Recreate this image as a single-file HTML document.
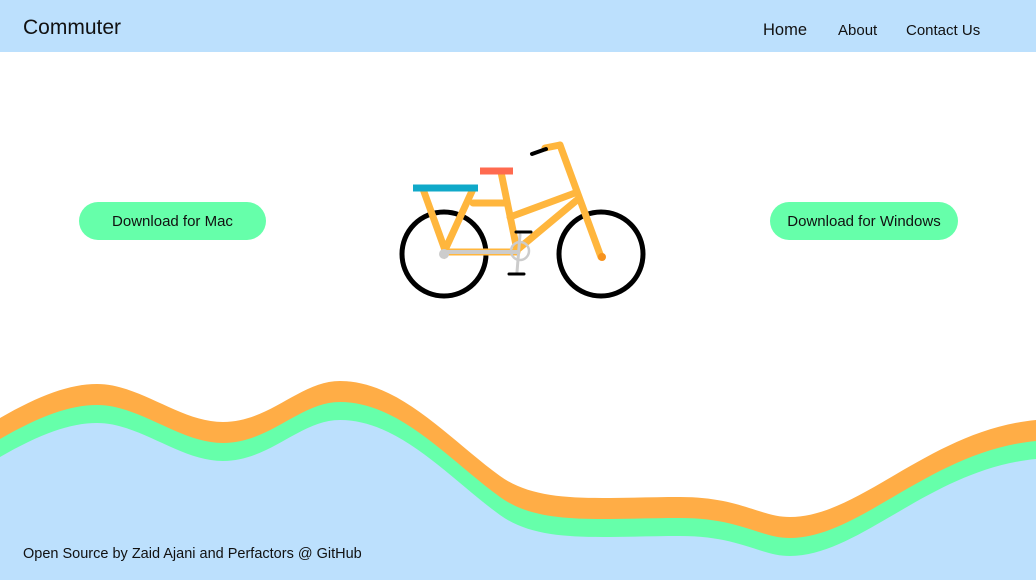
<!DOCTYPE html>
<html style="overflow:hidden;width:1036px;height:580px"><head><style>
body{margin:0;width:1036px;height:580px;overflow:hidden;background:#fff;font-family:"Liberation Sans",sans-serif;position:relative}
.nav{position:absolute;top:0;left:0;width:1036px;height:52px;background:#bce0fd}
.logo{position:absolute;left:23px;top:16px;font-size:21px;color:#111}
.nav a{position:absolute;top:22px;font-size:15px;color:#111;text-decoration:none}
.btn{position:absolute;top:202px;height:38px;border-radius:19px;background:#66ffaa;font-size:15px;color:#111;line-height:40px;text-align:center}
.foot{position:absolute;left:23px;top:546px;font-size:14.5px;color:#111}
svg{position:absolute;left:0;top:0;display:block}
</style></head><body>
<svg width="1036" height="580">
<path fill="#ffad46" d="M0,418 C40,395 70,384 97,384 C140,384 180,422 223,422 C270,422 300,381 340,381 C400,381 450,440 500,476 C540,505 600,497 680,497 C740,497 760,517 790,517 C860,517 930,430 1036,420 L1036,580 L0,580Z"/>
<path fill="#66ffaa" transform="translate(0,21)" d="M0,418 C40,395 70,384 97,384 C140,384 180,422 223,422 C270,422 300,381 340,381 C400,381 450,440 500,476 C540,505 600,497 680,497 C740,497 760,517 790,517 C860,517 930,430 1036,420 L1036,580 L0,580Z"/>
<path fill="#bce0fd" transform="translate(0,39)" d="M0,418 C40,395 70,384 97,384 C140,384 180,422 223,422 C270,422 300,381 340,381 C400,381 450,440 500,476 C540,505 600,497 680,497 C740,497 760,517 790,517 C860,517 930,430 1036,420 L1036,580 L0,580Z"/>
<g stroke-linecap="round" fill="none">
<circle cx="444" cy="254" r="42" stroke="#000" stroke-width="5"/>
<circle cx="601" cy="254" r="42" stroke="#000" stroke-width="5"/>
<g stroke="#ffb63d" stroke-width="7">
<path d="M423,189 L445,250 L473,189"/>
<path d="M445,252 L517,252"/>
<path d="M501,172 L517,250"/>
<path d="M473,203 L505,203"/>
<path d="M510,217 L575,193"/>
<path d="M517,250 L577,200"/>
<path d="M560,145 L601,257"/>
<path d="M545,148 L560,145"/>
</g>
<path d="M445,252 L517,252" stroke="#ccc" stroke-width="4"/>
<ellipse cx="444" cy="254" rx="5" ry="5" fill="#ccc" stroke="none"/>
<circle cx="520" cy="251" r="9" stroke="#ccc" stroke-width="2.5"/>
<path d="M520,235 L517,272" stroke="#ccc" stroke-width="3"/>
<path d="M516,232 L531,232 M509,274 L524,274" stroke="#000" stroke-width="3"/>
<path d="M532,154 L546,149" stroke="#000" stroke-width="4"/>
<circle cx="602" cy="257" r="4" fill="#f7931e" stroke="none"/>
<path d="M413,188 L478,188" stroke="#10a9c9" stroke-width="7" stroke-linecap="butt"/>
<path d="M480,171 L513,171" stroke="#ff6a4f" stroke-width="7" stroke-linecap="butt"/>
</g>
</svg>
<div class="nav"><div class="logo">Commuter</div>
<a style="left:763px;top:21px;font-size:16.5px">Home</a><a style="left:838px">About</a><a style="left:906px">Contact Us</a></div>
<div class="btn" style="left:79px;width:187px">Download for Mac</div>
<div class="btn" style="left:770px;width:188px">Download for Windows</div>
<div class="foot">Open Source by Zaid Ajani and Perfactors @ GitHub</div>
</body></html>
